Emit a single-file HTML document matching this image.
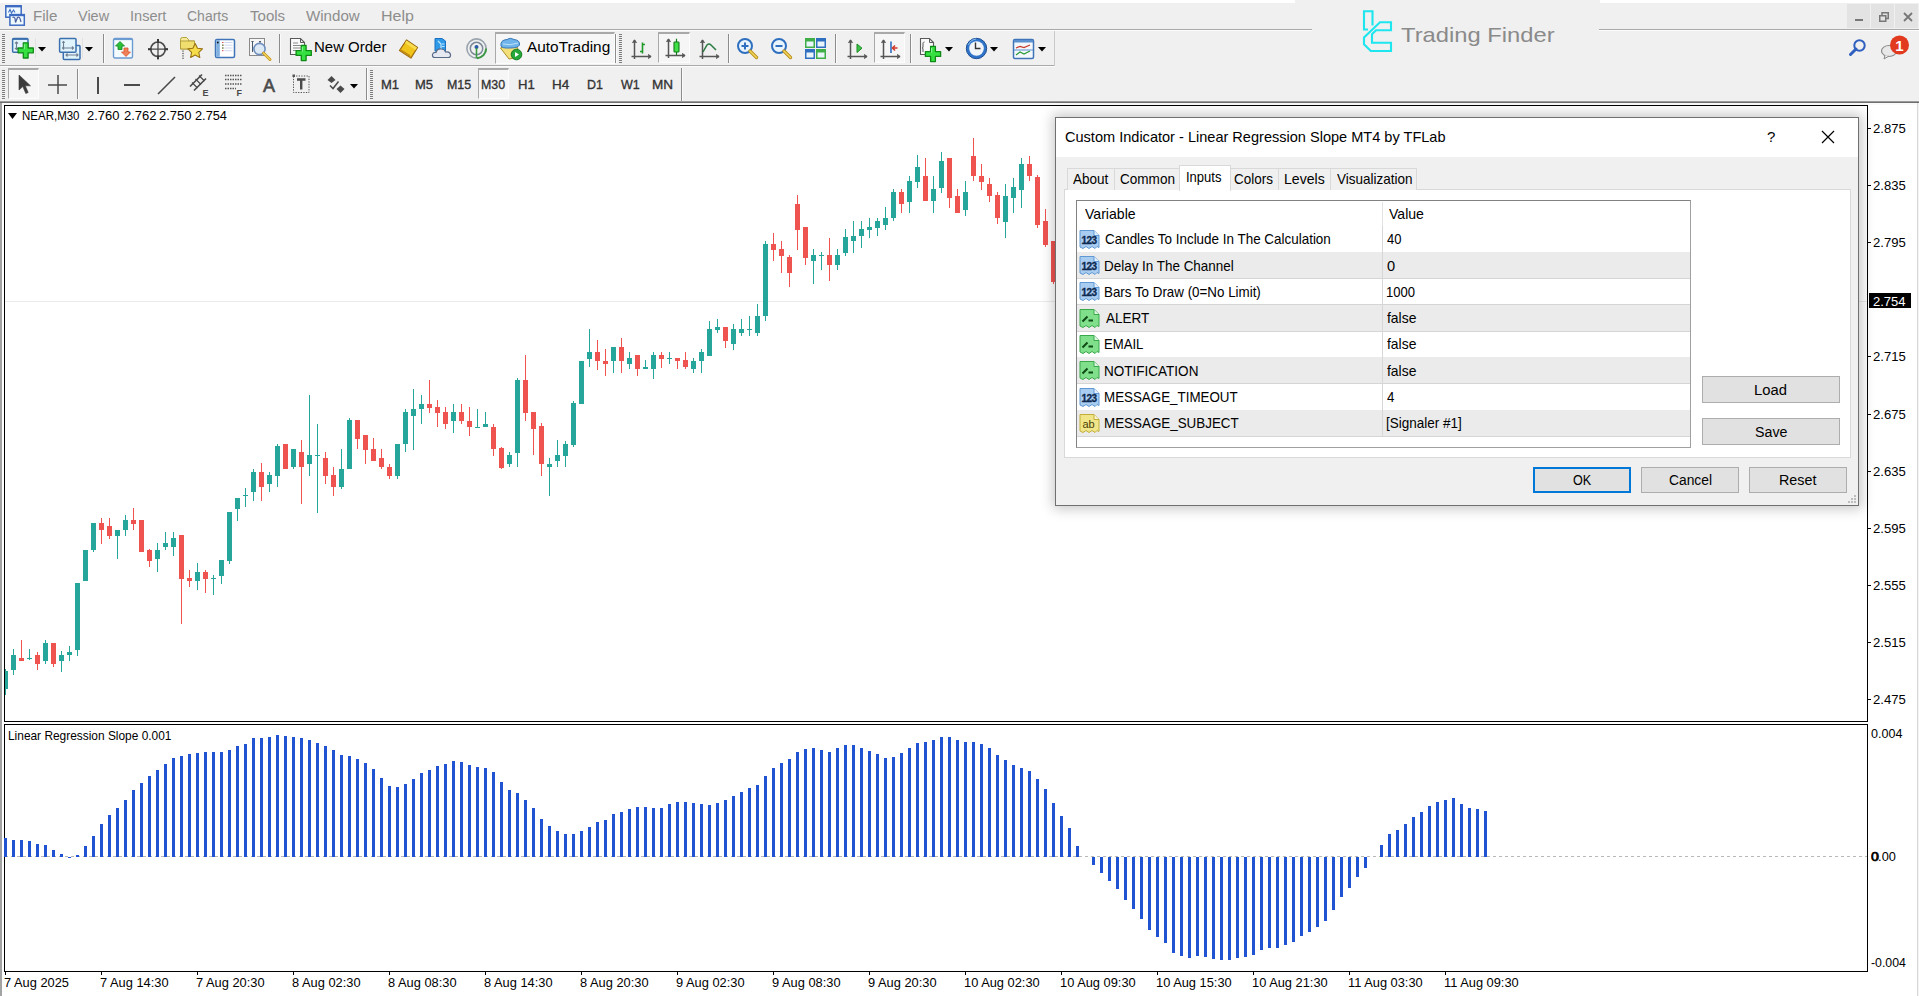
<!DOCTYPE html>
<html><head><meta charset="utf-8"><style>
*{margin:0;padding:0;box-sizing:border-box}
html,body{width:1919px;height:996px;overflow:hidden;background:#f0f0f0;font-family:"Liberation Sans",sans-serif;color:#000}
.a{position:absolute}
.t{position:absolute;white-space:nowrap;line-height:1}
svg{position:absolute;overflow:visible}
</style></head><body>

<div class="a" style="left:0;top:0;width:1919px;height:3px;background:#fff"></div>
<div class="a" style="left:1295px;top:0;width:305px;height:3px;background:#f0f0f0"></div>
<div class="a" style="left:0;top:29px;width:1312px;height:1px;background:#a9a9a9"></div>
<div class="a" style="left:1599px;top:29px;width:320px;height:1px;background:#a9a9a9"></div>
<div class="a" style="left:0;top:30px;width:1312px;height:1px;background:#fdfdfd"></div>
<div class="a" style="left:1599px;top:30px;width:320px;height:1px;background:#fdfdfd"></div>
<svg class="a" style="left:0px;top:0px" width="30" height="30" viewBox="0 0 30 30" >
<rect x="5.8" y="5.8" width="15.4" height="11.4" fill="#effaff" stroke="#3d6cc2" stroke-width="1.5"/>
<rect x="5.8" y="5.2" width="15.4" height="2.2" fill="#3d6cc2"/>
<path d="M8.5 12.5L10 9.5L11.5 13L13.5 10L15 12.5" stroke="#3d6cc2" stroke-width="1.1" fill="none"/>
<rect x="9.9" y="14.6" width="14.4" height="10.6" fill="#effaff" stroke="#3d6cc2" stroke-width="1.5"/>
<rect x="9.9" y="14" width="14.4" height="2.2" fill="#3d6cc2"/>
<path d="M12.5 17.5Q14 16.5 15 18.5L15.5 22.5L17.5 17.5Q19 16.5 20 18.5L21 22" stroke="#4a5fa0" stroke-width="1.2" fill="none"/>
</svg>
<div class="t" style="left:32.59px;top:8.48px;font-size:15.5px;color:#8d8d8d;transform:scaleX(0.9742);transform-origin:0 0;">File</div>
<div class="t" style="left:78.23px;top:8.48px;font-size:15.5px;color:#8d8d8d;transform:scaleX(0.9324);transform-origin:0 0;">View</div>
<div class="t" style="left:129.99px;top:8.48px;font-size:15.5px;color:#8d8d8d;transform:scaleX(0.9389);transform-origin:0 0;">Insert</div>
<div class="t" style="left:187.30px;top:8.48px;font-size:15.5px;color:#8d8d8d;transform:scaleX(0.9023);transform-origin:0 0;">Charts</div>
<div class="t" style="left:249.70px;top:8.48px;font-size:15.5px;color:#8d8d8d;transform:scaleX(0.9706);transform-origin:0 0;">Tools</div>
<div class="t" style="left:306.22px;top:8.48px;font-size:15.5px;color:#8d8d8d;transform:scaleX(0.9745);transform-origin:0 0;">Window</div>
<div class="t" style="left:380.72px;top:8.48px;font-size:15.5px;color:#8d8d8d;transform:scaleX(1.0336);transform-origin:0 0;">Help</div>
<div class="a" style="left:1847px;top:4px;width:23px;height:24px;background:#e3e3e3"></div>
<div class="a" style="left:1871px;top:4px;width:23px;height:24px;background:#e3e3e3"></div>
<div class="a" style="left:1895px;top:4px;width:23px;height:24px;background:#e3e3e3"></div>
<div class="a" style="left:1855px;top:19px;width:8px;height:2px;background:#777"></div><svg class="a" style="left:1879px;top:12px" width="10" height="10" viewBox="0 0 10 10" ><rect x="0.75" y="3.75" width="6" height="5.5" fill="none" stroke="#777" stroke-width="1.5"/><path d="M3 3.5V0.75H9.25V6.5H7" fill="none" stroke="#777" stroke-width="1.5"/></svg><svg class="a" style="left:1903px;top:12px" width="10" height="10" viewBox="0 0 10 10" ><path d="M1 1L9 9M9 1L1 9" stroke="#777" stroke-width="1.8"/></svg><svg class="a" style="left:1848px;top:38px" width="20" height="20" viewBox="0 0 20 20" ><circle cx="11.5" cy="7.5" r="5.2" fill="none" stroke="#2f5fbf" stroke-width="2"/><path d="M8 11L2.5 16.5" stroke="#2f5fbf" stroke-width="3" stroke-linecap="round"/></svg><svg class="a" style="left:1880px;top:34px" width="30" height="28" viewBox="0 0 30 28" ><ellipse cx="9" cy="17" rx="7.5" ry="5.5" fill="#e8e8e8" stroke="#8a8a8a" stroke-width="1.2"/><path d="M5 21L4 25L9 22" fill="#e8e8e8" stroke="#8a8a8a" stroke-width="1"/><circle cx="19.5" cy="11" r="9.5" fill="#e23a1e"/><text x="19.5" y="16.5" text-anchor="middle" font-family="Liberation Sans" font-weight="bold" font-size="15" fill="#fff">1</text></svg>
<svg class="a" style="left:1355px;top:5px" width="45" height="53" viewBox="0 0 45 53" ><g fill="none" stroke="#1de6ee" stroke-width="2.1" stroke-linejoin="miter">
      <path d="M13 24.5H9V6.3H17.5V20.5"/>
      <path d="M25 17.2H36V25.3H21L17 29.3V37.8H36V46H15.8L9 39.2V32.5Z"/>
      </g></svg><div class="t" style="left:1401.02px;top:25.31px;font-size:20.3px;color:#8a8a8a;transform:scaleX(1.1712);transform-origin:0 0;font-weight:300;">Trading Finder</div>
<div class="a" style="left:0;top:65px;width:1055px;height:1px;background:#a9a9a9"></div>
<div class="a" style="left:0;top:66px;width:1055px;height:1px;background:#fbfbfb"></div>
<div class="a" style="left:1054px;top:31px;width:1px;height:35px;background:#c9c9c9"></div>
<div class="a" style="left:0;top:101px;width:1919px;height:1px;background:#9c9c9c"></div>
<div class="a" style="left:0;top:102px;width:1919px;height:1px;background:#6e6e6e"></div>
<div class="a" style="left:0;top:103px;width:1919px;height:2px;background:#fafafa"></div>
<svg class="a" style="left:2px;top:34px" width="3" height="29" viewBox="0 0 3 29" shape-rendering="crispEdges"><rect x="0" y="0" width="3" height="1" fill="#7d7d7d"/><rect x="0" y="2" width="3" height="1" fill="#7d7d7d"/><rect x="0" y="4" width="3" height="1" fill="#7d7d7d"/><rect x="0" y="6" width="3" height="1" fill="#7d7d7d"/><rect x="0" y="8" width="3" height="1" fill="#7d7d7d"/><rect x="0" y="10" width="3" height="1" fill="#7d7d7d"/><rect x="0" y="12" width="3" height="1" fill="#7d7d7d"/><rect x="0" y="14" width="3" height="1" fill="#7d7d7d"/><rect x="0" y="16" width="3" height="1" fill="#7d7d7d"/><rect x="0" y="18" width="3" height="1" fill="#7d7d7d"/><rect x="0" y="20" width="3" height="1" fill="#7d7d7d"/><rect x="0" y="22" width="3" height="1" fill="#7d7d7d"/><rect x="0" y="24" width="3" height="1" fill="#7d7d7d"/><rect x="0" y="26" width="3" height="1" fill="#7d7d7d"/><rect x="0" y="28" width="3" height="1" fill="#7d7d7d"/></svg><svg class="a" style="left:11px;top:37px" width="24" height="22" viewBox="0 0 24 22" ><rect x="1.6" y="1.6" width="15.4" height="13.6" rx="1" fill="#e2f4fb" stroke="#3b6fae" stroke-width="1.5"/>
      <path d="M2 2.3H16.5" stroke="#3b6fae" stroke-width="1.2"/>
      <path d="M5.5 5V12.5M4 6.5L5.5 5L7 6.5M4 11L5.5 12.5L7 11" stroke="#6f7f90" stroke-width="1.1" fill="none"/>
      <path d="M12.299999999999999 5.800000000000001H17.099999999999998V11.0H22.299999999999997V15.8H17.099999999999998V21.0H12.299999999999999V15.8H7.1V11.0H12.299999999999999Z" fill="#35e040" stroke="#0f8a16" stroke-width="1.3" stroke-linejoin="round"/><path d="M13.299999999999999 7.300000000000001V12.0" stroke="#8ff59a" stroke-width="1"/></svg><svg class="a" style="left:38px;top:47px" width="9" height="5" viewBox="0 0 9 5" ><path d="M0 0H8L4 4.5Z" fill="#000"/></svg><div class="a" style="left:35px;top:38px;width:1px;height:20px;background:#e2e2e2"></div><svg class="a" style="left:58px;top:37px" width="24" height="24" viewBox="0 0 24 24" ><rect x="5.3" y="8.6" width="16.7" height="14" rx="1" fill="#e2f4fb" stroke="#3b6fae" stroke-width="1.5"/>
      <path d="M8 18H20M9.5 16.5L8 18L9.5 19.5M18.5 16.5L20 18L18.5 19.5" stroke="#6f7f90" stroke-width="1.1" fill="none"/>
      <rect x="1.6" y="1.6" width="16.4" height="13.6" rx="1" fill="#e2f4fb" stroke="#3b6fae" stroke-width="1.5"/>
      <path d="M4.5 11H15.5M6 9.5L4.5 11L6 12.5M14 9.5L15.5 11L14 12.5M5.5 4.5V9.5M4.3 5.7L5.5 4.5L6.7 5.7" stroke="#6f7f90" stroke-width="1.1" fill="none"/></svg><svg class="a" style="left:85px;top:47px" width="9" height="5" viewBox="0 0 9 5" ><path d="M0 0H8L4 4.5Z" fill="#000"/></svg><div class="a" style="left:82px;top:38px;width:1px;height:20px;background:#e2e2e2"></div><div class="a" style="left:103px;top:34px;width:1px;height:29px;background:#8c8c8c"></div><div class="a" style="left:104px;top:34px;width:1px;height:29px;background:#fbfbfb"></div><svg class="a" style="left:112px;top:37px" width="23" height="23" viewBox="0 0 23 23" ><rect x="1.5" y="1.5" width="19" height="19.5" rx="1.5" fill="#f4fbfe" stroke="#6c9bd2" stroke-width="1.4"/>
      <path d="M2 2.5H20" stroke="#6c9bd2" stroke-width="1.2"/>
      <path d="M8 4.5L12.5 9H10V12.5H6V9H3.5Z" fill="#2bc23a" stroke="#13801c" stroke-width="0.8"/>
      <path d="M14 19.5L18.5 15H16V11H12V15H9.5Z" fill="#f08058" stroke="#d9542c" stroke-width="0.8"/></svg><svg class="a" style="left:147px;top:38px" width="22" height="22" viewBox="0 0 22 22" ><circle cx="11" cy="11.2" r="7.2" fill="none" stroke="#4a4a4a" stroke-width="1.7"/>
      <path d="M11 1V21.2M1 11.2H21" stroke="#4a4a4a" stroke-width="1.3"/>
      <path d="M11 1V5M11 17.4V21.2M1 11.2H4.5M17.5 11.2H21" stroke="#3a3a3a" stroke-width="2"/></svg><svg class="a" style="left:179px;top:36px" width="25" height="26" viewBox="0 0 25 26" ><path d="M1.5 3.5Q1.5 1.5 3.5 1.5H7.5L9.5 3.5V5H15.5V13H1.5Z" fill="#f7ea9a" stroke="#b3a13c" stroke-width="1"/>
      <path d="M1.5 5H15.5V13H1.5Z" fill="#f0de6e" stroke="#b3a13c" stroke-width="1"/>
      <path d="M16.2 7.5L18.5 12.2L23.5 12.9L19.8 16.4L20.8 21.5L16.2 19L11.6 21.5L12.6 16.4L8.9 12.9L13.9 12.2Z" fill="#f5dc48" stroke="#9a7414" stroke-width="1.1" stroke-linejoin="round"/>
      <path d="M4 14.5V23.5" stroke="#222" stroke-width="1" stroke-dasharray="1.2,1.2"/></svg><svg class="a" style="left:214px;top:38px" width="22" height="21" viewBox="0 0 22 21" ><rect x="1.5" y="1.5" width="19" height="18" rx="1.5" fill="#fff" stroke="#3f75b8" stroke-width="1.5"/>
      <rect x="2.2" y="2.2" width="3.6" height="16.6" fill="#7fb0e0"/>
      <circle cx="3.8" cy="4.5" r="0.9" fill="#111"/>
      <path d="M8 4.5H9.5M8 7.2H9.5M8 10H9.5M8 12.7H9.5" stroke="#d05050" stroke-width="1"/>
      <path d="M8 7.2H9.5M8 10H9.5" stroke="#4a9a4a" stroke-width="1"/>
      <path d="M10.5 4.5H18.5M10.5 7.2H18.5M10.5 10H18.5M10.5 12.7H18.5" stroke="#c8d4ec" stroke-width="0.9"/></svg><svg class="a" style="left:248px;top:37px" width="25" height="26" viewBox="0 0 25 26" ><rect x="1.5" y="1.5" width="15" height="17" fill="#f6f6f6" stroke="#8a8a8a" stroke-width="1"/>
      <path d="M4.5 4V15M3.5 5L4.5 4L5.5 5M12 4V15M11 5L12 4L13 5" stroke="#4a5a6a" stroke-width="1"/>
      <circle cx="11.5" cy="12" r="5.6" fill="#dde9f5" stroke="#6e8fbf" stroke-width="1.6"/>
      <path d="M15.5 16L22 22.5" stroke="#c89a1c" stroke-width="3" stroke-linecap="round"/>
      <path d="M15.5 16L22 22.5" stroke="#f0d060" stroke-width="1.2" stroke-linecap="round"/></svg><div class="a" style="left:279px;top:34px;width:1px;height:29px;background:#8c8c8c"></div><div class="a" style="left:280px;top:34px;width:1px;height:29px;background:#fbfbfb"></div><svg class="a" style="left:289px;top:37px" width="24" height="25" viewBox="0 0 24 25" ><path d="M1.5 1.5H11.5L15.5 5.5V17.5H1.5Z" fill="#fafafa" stroke="#5a5a5a" stroke-width="1.1"/>
      <path d="M11.5 1.5V5.5H15.5" fill="none" stroke="#5a5a5a" stroke-width="1"/>
      <path d="M4 6H9M4 8.5H12M4 11H12M4 13.5H8" stroke="#8a8a8a" stroke-width="1"/>
      <path d="M12.299999999999999 8.4H17.099999999999998V13.6H22.299999999999997V18.4H17.099999999999998V23.6H12.299999999999999V18.4H7.1V13.6H12.299999999999999Z" fill="#35e040" stroke="#0f8a16" stroke-width="1.3" stroke-linejoin="round"/><path d="M13.299999999999999 9.9V14.6" stroke="#8ff59a" stroke-width="1"/></svg><div class="t" style="left:314.10px;top:40.47px;font-size:14.8px;color:#000;transform:scaleX(1.0121);transform-origin:0 0;">New Order</div><svg class="a" style="left:397px;top:38px" width="24" height="22" viewBox="0 0 24 22" ><path d="M2.5 12.5L9.5 2L20.5 9.5L14 20Z" fill="#f0c419" stroke="#9c6a10" stroke-width="1.3" stroke-linejoin="round"/>
      <path d="M9.5 2.5L20 9.5L18.5 12L8 5Z" fill="#f8dc50"/>
      <path d="M2.5 12.5L14 20L13 17L3.5 11Z" fill="#c08a18"/></svg><svg class="a" style="left:431px;top:37px" width="24" height="23" viewBox="0 0 24 23" ><path d="M4 1.5H11L14.5 4V14H4Z" fill="#2e9ae8" stroke="#1a6fc0" stroke-width="1"/>
      <path d="M7 4L10 7V13M11 7H13.5M11 9.5H13.5" stroke="#bfe6ff" stroke-width="1.2" fill="none"/>
      <path d="M4 20.5Q1 20.5 1.5 17.5Q2 15 5 15.5Q6 11.5 10.5 12Q14 12.5 14.5 15Q18.5 14 19.5 17.5Q20 20.5 17 20.5Z" fill="#e6e8f2" stroke="#5a6b88" stroke-width="1.2"/></svg><svg class="a" style="left:465px;top:37px" width="24" height="24" viewBox="0 0 24 24" ><circle cx="11.5" cy="11.5" r="9.6" fill="none" stroke="#9aa4ae" stroke-width="1.6"/>
      <circle cx="11.5" cy="11.5" r="6.2" fill="none" stroke="#7a8898" stroke-width="1.5"/>
      <circle cx="11.5" cy="10" r="2" fill="#2a5aa8"/>
      <path d="M12 21.2A9.6 9.6 0 0 0 21.1 11.5" fill="none" stroke="#3a9a42" stroke-width="2"/>
      <path d="M11.5 11V21" stroke="#3a9a42" stroke-width="1.6"/></svg><div class="a" style="left:495px;top:32px;width:120px;height:32px;background:#f6f6f6;border-top:2px solid #a9a9a9;border-left:1px solid #a9a9a9;border-right:1px solid #fdfdfd;border-bottom:1px solid #fdfdfd"></div><svg class="a" style="left:498px;top:36px" width="26" height="25" viewBox="0 0 26 25" ><path d="M2.5 12L13 8L20 12L16 22L11 23Z" fill="#f3e07a" stroke="#a89030" stroke-width="1"/>
      <path d="M3 10Q2 4 9 3.5Q12 1 16 3.5Q22 4 21.5 9Q20 12 12 12Q4 12.5 3 10Z" fill="#6fb4ea" stroke="#3a78b8" stroke-width="1"/>
      <path d="M5 8Q12 10 20 7" stroke="#bfe2fb" stroke-width="1" fill="none"/>
      <circle cx="18.5" cy="18.5" r="5.3" fill="#27a83a" stroke="#137a22" stroke-width="1"/>
      <path d="M17 16V21L21 18.5Z" fill="#fff"/></svg><div class="t" style="left:527.00px;top:40.47px;font-size:14.8px;color:#000;transform:scaleX(1.0394);transform-origin:0 0;">AutoTrading</div><div class="a" style="left:615px;top:34px;width:1px;height:29px;background:#8c8c8c"></div><div class="a" style="left:616px;top:34px;width:1px;height:29px;background:#fbfbfb"></div><svg class="a" style="left:619px;top:34px" width="3" height="29" viewBox="0 0 3 29" shape-rendering="crispEdges"><rect x="0" y="0" width="3" height="1" fill="#7d7d7d"/><rect x="0" y="2" width="3" height="1" fill="#7d7d7d"/><rect x="0" y="4" width="3" height="1" fill="#7d7d7d"/><rect x="0" y="6" width="3" height="1" fill="#7d7d7d"/><rect x="0" y="8" width="3" height="1" fill="#7d7d7d"/><rect x="0" y="10" width="3" height="1" fill="#7d7d7d"/><rect x="0" y="12" width="3" height="1" fill="#7d7d7d"/><rect x="0" y="14" width="3" height="1" fill="#7d7d7d"/><rect x="0" y="16" width="3" height="1" fill="#7d7d7d"/><rect x="0" y="18" width="3" height="1" fill="#7d7d7d"/><rect x="0" y="20" width="3" height="1" fill="#7d7d7d"/><rect x="0" y="22" width="3" height="1" fill="#7d7d7d"/><rect x="0" y="24" width="3" height="1" fill="#7d7d7d"/><rect x="0" y="26" width="3" height="1" fill="#7d7d7d"/><rect x="0" y="28" width="3" height="1" fill="#7d7d7d"/></svg><svg class="a" style="left:631px;top:39px" width="21" height="21" viewBox="0 0 21 21" ><path d="M3.5 1V20M0.5 17.5H20" stroke="#555" stroke-width="1.5" fill="none"/>
      <path d="M1.3 3.8L3.5 0.8L5.7 3.8M17.2 15.3L20.2 17.5L17.2 19.7" fill="#555" stroke="#555" stroke-width="0.8"/><path d="M11.5 3.5V14.5M9 12.5H11.5M11.5 5.5H14" stroke="#1f9a2a" stroke-width="1.6" fill="none"/></svg><div class="a" style="left:658px;top:32px;width:32px;height:31px;background:#f6f6f6;border-top:2px solid #a9a9a9;border-left:1px solid #a9a9a9;border-right:1px solid #fdfdfd;border-bottom:1px solid #fdfdfd"></div><svg class="a" style="left:665px;top:38px" width="21" height="22" viewBox="0 0 21 22" ><path d="M3.5 1V20M0.5 17.5H20" stroke="#555" stroke-width="1.5" fill="none"/>
      <path d="M1.3 3.8L3.5 0.8L5.7 3.8M17.2 15.3L20.2 17.5L17.2 19.7" fill="#555" stroke="#555" stroke-width="0.8"/><rect x="9" y="4" width="5" height="10" rx="0.8" fill="#3ee046" stroke="#127a1a" stroke-width="1.1"/>
      <path d="M11.5 0.8V4M11.5 14V17" stroke="#127a1a" stroke-width="1.2"/></svg><svg class="a" style="left:699px;top:39px" width="21" height="21" viewBox="0 0 21 21" ><path d="M3.5 1V20M0.5 17.5H20" stroke="#555" stroke-width="1.5" fill="none"/>
      <path d="M1.3 3.8L3.5 0.8L5.7 3.8M17.2 15.3L20.2 17.5L17.2 19.7" fill="#555" stroke="#555" stroke-width="0.8"/><path d="M4 13L8 6Q10 4 12 6L17 11" fill="none" stroke="#2a7a42" stroke-width="1.5"/></svg><div class="a" style="left:728px;top:34px;width:1px;height:29px;background:#8c8c8c"></div><div class="a" style="left:729px;top:34px;width:1px;height:29px;background:#fbfbfb"></div><svg class="a" style="left:736px;top:37px" width="24" height="24" viewBox="0 0 24 24" ><circle cx="9" cy="9" r="7" fill="#eaf4fc" stroke="#2e6fbf" stroke-width="2"/>
      <path d="M5.5 9H12.5M9 5.5V12.5" stroke="#2e6fbf" stroke-width="2"/>
      <path d="M14 14L20.5 20.5" stroke="#b8901c" stroke-width="3.4" stroke-linecap="round"/>
      <path d="M14 14L20.5 20.5" stroke="#f2d45a" stroke-width="1.6" stroke-linecap="round"/></svg><svg class="a" style="left:770px;top:37px" width="24" height="24" viewBox="0 0 24 24" ><circle cx="9" cy="9" r="7" fill="#eaf4fc" stroke="#2e6fbf" stroke-width="2"/>
      <path d="M5.5 9H12.5" stroke="#2e6fbf" stroke-width="2"/>
      <path d="M14 14L20.5 20.5" stroke="#b8901c" stroke-width="3.4" stroke-linecap="round"/>
      <path d="M14 14L20.5 20.5" stroke="#f2d45a" stroke-width="1.6" stroke-linecap="round"/></svg><svg class="a" style="left:804px;top:37px" width="23" height="23" viewBox="0 0 23 23" ><rect x="1" y="1" width="10" height="10" fill="#3fae47"/><rect x="12" y="1" width="10" height="10" fill="#2e6fbf"/>
      <rect x="1" y="12" width="10" height="10" fill="#2e6fbf"/><rect x="12" y="12" width="10" height="10" fill="#3fae47"/>
      <rect x="2.5" y="4.5" width="7" height="5" fill="#e9f5fb"/><rect x="13.5" y="4.5" width="7" height="5" fill="#e9f5fb"/>
      <rect x="2.5" y="15.5" width="7" height="5" fill="#e9f5fb"/><rect x="13.5" y="15.5" width="7" height="5" fill="#e9f5fb"/></svg><div class="a" style="left:835px;top:34px;width:1px;height:29px;background:#8c8c8c"></div><div class="a" style="left:836px;top:34px;width:1px;height:29px;background:#fbfbfb"></div><svg class="a" style="left:847px;top:39px" width="21" height="21" viewBox="0 0 21 21" ><path d="M3.5 1V20M0.5 17.5H20" stroke="#555" stroke-width="1.5" fill="none"/>
      <path d="M1.3 3.8L3.5 0.8L5.7 3.8M17.2 15.3L20.2 17.5L17.2 19.7" fill="#555" stroke="#555" stroke-width="0.8"/><path d="M10 5V13.5L15 9.2Z" fill="#3fc24a" stroke="#1a8a22" stroke-width="1"/></svg><div class="a" style="left:874px;top:32px;width:31px;height:31px;background:#f6f6f6;border-top:2px solid #a9a9a9;border-left:1px solid #a9a9a9;border-right:1px solid #fdfdfd;border-bottom:1px solid #fdfdfd"></div><svg class="a" style="left:880px;top:39px" width="21" height="21" viewBox="0 0 21 21" ><path d="M3.5 1V20M0.5 17.5H20" stroke="#555" stroke-width="1.5" fill="none"/>
      <path d="M1.3 3.8L3.5 0.8L5.7 3.8M17.2 15.3L20.2 17.5L17.2 19.7" fill="#555" stroke="#555" stroke-width="0.8"/><path d="M11 2.5V14" stroke="#2e6fbf" stroke-width="1.6"/><path d="M17.5 9H13M15 6.5L12.5 9L15 11.5" fill="none" stroke="#d23a2a" stroke-width="1.6"/></svg><div class="a" style="left:910px;top:34px;width:1px;height:29px;background:#8c8c8c"></div><div class="a" style="left:911px;top:34px;width:1px;height:29px;background:#fbfbfb"></div><svg class="a" style="left:919px;top:37px" width="24" height="26" viewBox="0 0 24 26" ><path d="M1.5 1.5H10.5L14.5 5.5V17.5H1.5Z" fill="#fafafa" stroke="#5a5a5a" stroke-width="1.1"/>
      <path d="M10.5 1.5V5.5H14.5" fill="none" stroke="#5a5a5a" stroke-width="1"/>
      <path d="M5.5 5C4 5 4 6 4 7V10Q4 11 3 11Q4 11 4 12V15" fill="none" stroke="#555" stroke-width="1"/>
      <path d="M11.6 9.4H16.4V14.6H21.6V19.4H16.4V24.6H11.6V19.4H6.4V14.6H11.6Z" fill="#35e040" stroke="#0f8a16" stroke-width="1.3" stroke-linejoin="round"/><path d="M12.6 10.9V15.6" stroke="#8ff59a" stroke-width="1"/></svg><svg class="a" style="left:945px;top:47px" width="9" height="5" viewBox="0 0 9 5" ><path d="M0 0H8L4 4.5Z" fill="#000"/></svg><svg class="a" style="left:965px;top:37px" width="23" height="23" viewBox="0 0 23 23" ><circle cx="11.5" cy="11.5" r="10.2" fill="#2f74c8" stroke="#1c4f96" stroke-width="1"/>
      <circle cx="11.5" cy="11.5" r="7.3" fill="#f2f6fb"/>
      <path d="M10.5 5.5V11.5H15.5" stroke="#333" stroke-width="1.4" fill="none"/>
      <path d="M3.5 8Q5 3 11 2" stroke="#8cc0f0" stroke-width="1" fill="none"/></svg><svg class="a" style="left:990px;top:47px" width="9" height="5" viewBox="0 0 9 5" ><path d="M0 0H8L4 4.5Z" fill="#000"/></svg><svg class="a" style="left:1012px;top:38px" width="23" height="22" viewBox="0 0 23 22" ><rect x="1.5" y="1.5" width="20" height="19" rx="1.5" fill="#f4f8fc" stroke="#3f75b8" stroke-width="1.5"/>
      <rect x="2" y="2" width="19" height="2.5" fill="#5a90d0"/>
      <path d="M4 10L8 8.5L12 9.5L18 7" fill="none" stroke="#c83a2a" stroke-width="1.2"/>
      <path d="M4 17L8 14L12 16L18 13" fill="none" stroke="#2a9a3a" stroke-width="1.2"/>
      <path d="M2 12H21" stroke="#5a90d0" stroke-width="1"/></svg><svg class="a" style="left:1038px;top:47px" width="9" height="5" viewBox="0 0 9 5" ><path d="M0 0H8L4 4.5Z" fill="#000"/></svg>
<svg class="a" style="left:2px;top:70px" width="3" height="29" viewBox="0 0 3 29" shape-rendering="crispEdges"><rect x="0" y="0" width="3" height="1" fill="#7d7d7d"/><rect x="0" y="2" width="3" height="1" fill="#7d7d7d"/><rect x="0" y="4" width="3" height="1" fill="#7d7d7d"/><rect x="0" y="6" width="3" height="1" fill="#7d7d7d"/><rect x="0" y="8" width="3" height="1" fill="#7d7d7d"/><rect x="0" y="10" width="3" height="1" fill="#7d7d7d"/><rect x="0" y="12" width="3" height="1" fill="#7d7d7d"/><rect x="0" y="14" width="3" height="1" fill="#7d7d7d"/><rect x="0" y="16" width="3" height="1" fill="#7d7d7d"/><rect x="0" y="18" width="3" height="1" fill="#7d7d7d"/><rect x="0" y="20" width="3" height="1" fill="#7d7d7d"/><rect x="0" y="22" width="3" height="1" fill="#7d7d7d"/><rect x="0" y="24" width="3" height="1" fill="#7d7d7d"/><rect x="0" y="26" width="3" height="1" fill="#7d7d7d"/><rect x="0" y="28" width="3" height="1" fill="#7d7d7d"/></svg><div class="a" style="left:8px;top:68px;width:31px;height:31px;background:#f6f6f6;border-top:2px solid #a9a9a9;border-left:1px solid #a9a9a9;border-right:1px solid #fdfdfd;border-bottom:1px solid #fdfdfd"></div><svg class="a" style="left:17px;top:74px" width="14" height="22" viewBox="0 0 14 22" ><path d="M2 1V16L5.8 12.6L8.8 19.5L11.2 18.5L8.3 11.8H13.5Z" fill="#3c3c3c" stroke="#3c3c3c" stroke-width="0.6" stroke-linejoin="round"/></svg><svg class="a" style="left:47px;top:74px" width="22" height="22" viewBox="0 0 22 22" ><path d="M11 1V20M1 11H20" stroke="#4a4a4a" stroke-width="1.5"/></svg><div class="a" style="left:77px;top:69px;width:1px;height:30px;background:#8c8c8c"></div><div class="a" style="left:78px;top:69px;width:1px;height:30px;background:#fbfbfb"></div><div class="a" style="left:97px;top:77px;width:2px;height:17px;background:#4a4a4a"></div><div class="a" style="left:124px;top:84px;width:16px;height:2px;background:#4a4a4a"></div><svg class="a" style="left:157px;top:76px" width="19" height="19" viewBox="0 0 19 19" ><path d="M1 18L18 1" stroke="#4a4a4a" stroke-width="1.6"/></svg><svg class="a" style="left:189px;top:73px" width="23" height="24" viewBox="0 0 23 24" ><path d="M1 13.5L13 1.5M5 17.5L17 5.5" stroke="#4a4a4a" stroke-width="1.6"/><path d="M3 9.5L8.5 15M6.5 6L12 11.5M10 2.5L15.5 8" stroke="#4a4a4a" stroke-width="1.2"/>
       <text x="13.5" y="23" font-family="Liberation Sans" font-weight="bold" font-size="9" fill="#4a4a4a">E</text></svg><svg class="a" style="left:224px;top:73px" width="22" height="24" viewBox="0 0 22 24" ><path d="M1 2.5H18M1 6.5H18M1 11H18M1 15.5H12" stroke="#555" stroke-width="1.3" stroke-dasharray="1.5,1"/>
       <text x="12.5" y="23" font-family="Liberation Sans" font-weight="bold" font-size="9" fill="#4a4a4a">F</text></svg><div class="t" style="left:263.00px;top:75.91px;font-size:19px;color:#4a4a4a;transform:scaleX(0.9497);transform-origin:0 0;-webkit-text-stroke:0.6px #4a4a4a;">A</div><svg class="a" style="left:292px;top:74px" width="19" height="20" viewBox="0 0 19 20" ><rect x="1.5" y="2" width="15.5" height="16.5" fill="none" stroke="#555" stroke-width="1" stroke-dasharray="1.3,1.3"/>
       <rect x="0.5" y="0.5" width="2.5" height="2.5" fill="#555"/>
       <path d="M5 5.5H13.5M9.2 5.5V15.5" stroke="#4a4a4a" stroke-width="2.4"/></svg><svg class="a" style="left:326px;top:75px" width="20" height="19" viewBox="0 0 20 19" ><path d="M5.5 1L9.5 5L5.5 8L1.5 5Z" fill="#4a4a4a"/><path d="M14.5 10.5L18.5 14L14.5 18L10.5 14Z" fill="#4a4a4a"/><path d="M4 10.5L7 13.5L12.5 6.5" fill="none" stroke="#4a4a4a" stroke-width="1.5"/></svg><svg class="a" style="left:350px;top:84px" width="9" height="5" viewBox="0 0 9 5" ><path d="M0 0H8L4 4.5Z" fill="#000"/></svg><div class="a" style="left:366px;top:68px;width:1px;height:32px;background:#8c8c8c"></div><div class="a" style="left:367px;top:68px;width:1px;height:32px;background:#fbfbfb"></div><svg class="a" style="left:370px;top:70px" width="3" height="29" viewBox="0 0 3 29" shape-rendering="crispEdges"><rect x="0" y="0" width="3" height="1" fill="#7d7d7d"/><rect x="0" y="2" width="3" height="1" fill="#7d7d7d"/><rect x="0" y="4" width="3" height="1" fill="#7d7d7d"/><rect x="0" y="6" width="3" height="1" fill="#7d7d7d"/><rect x="0" y="8" width="3" height="1" fill="#7d7d7d"/><rect x="0" y="10" width="3" height="1" fill="#7d7d7d"/><rect x="0" y="12" width="3" height="1" fill="#7d7d7d"/><rect x="0" y="14" width="3" height="1" fill="#7d7d7d"/><rect x="0" y="16" width="3" height="1" fill="#7d7d7d"/><rect x="0" y="18" width="3" height="1" fill="#7d7d7d"/><rect x="0" y="20" width="3" height="1" fill="#7d7d7d"/><rect x="0" y="22" width="3" height="1" fill="#7d7d7d"/><rect x="0" y="24" width="3" height="1" fill="#7d7d7d"/><rect x="0" y="26" width="3" height="1" fill="#7d7d7d"/><rect x="0" y="28" width="3" height="1" fill="#7d7d7d"/></svg><div class="t" style="left:381.46px;top:78.34px;font-size:13.3px;color:#333;transform:scaleX(0.9807);transform-origin:0 0;-webkit-text-stroke:0.35px #333;">M1</div><div class="t" style="left:415.46px;top:78.34px;font-size:13.3px;color:#333;transform:scaleX(0.9769);transform-origin:0 0;-webkit-text-stroke:0.35px #333;">M5</div><div class="t" style="left:447.20px;top:78.34px;font-size:13.3px;color:#333;transform:scaleX(0.9352);transform-origin:0 0;-webkit-text-stroke:0.35px #333;">M15</div><div class="a" style="left:478px;top:68px;width:31px;height:31px;background:#f6f6f6;border-top:2px solid #a9a9a9;border-left:1px solid #a9a9a9;border-right:1px solid #fdfdfd;border-bottom:1px solid #fdfdfd"></div><div class="t" style="left:481.21px;top:78.34px;font-size:13.3px;color:#333;transform:scaleX(0.9327);transform-origin:0 0;-webkit-text-stroke:0.35px #333;">M30</div><div class="t" style="left:518.45px;top:78.34px;font-size:13.3px;color:#333;transform:scaleX(0.9873);transform-origin:0 0;-webkit-text-stroke:0.35px #333;">H1</div><div class="t" style="left:551.62px;top:78.34px;font-size:13.3px;color:#333;transform:scaleX(1.0154);transform-origin:0 0;-webkit-text-stroke:0.35px #333;">H4</div><div class="t" style="left:587.21px;top:78.34px;font-size:13.3px;color:#333;transform:scaleX(0.9349);transform-origin:0 0;-webkit-text-stroke:0.35px #333;">D1</div><div class="t" style="left:621.34px;top:78.34px;font-size:13.3px;color:#333;transform:scaleX(0.9386);transform-origin:0 0;-webkit-text-stroke:0.35px #333;">W1</div><div class="t" style="left:652.02px;top:78.34px;font-size:13.3px;color:#333;transform:scaleX(1.0187);transform-origin:0 0;-webkit-text-stroke:0.35px #333;">MN</div><div class="a" style="left:681px;top:68px;width:1px;height:33px;background:#8c8c8c"></div><div class="a" style="left:682px;top:68px;width:1px;height:33px;background:#fbfbfb"></div>
<div class="a" style="left:0;top:103px;width:2px;height:893px;background:#a3a3a3"></div>
<div class="a" style="left:2px;top:105px;width:2px;height:891px;background:#fff"></div>
<div class="a" style="left:1868px;top:105px;width:49px;height:891px;background:#fff"></div>
<div class="a" style="left:1917px;top:103px;width:1px;height:893px;background:#d9d9d9"></div>
<div class="a" style="left:1918px;top:103px;width:1px;height:893px;background:#f3f3f3"></div>
<div class="a" style="left:4px;top:971px;width:1864px;height:25px;background:#fff"></div>
<svg class="a" style="left:0;top:0" width="1919" height="996" viewBox="0 0 1919 996" shape-rendering="crispEdges"><rect x="5" y="106" width="1862" height="615" fill="#fff"/><rect x="4" y="722" width="1864" height="2" fill="#fff"/><rect x="5" y="725" width="1862" height="246" fill="#fff"/><rect x="4" y="105" width="1864" height="1" fill="#000"/><rect x="4" y="721" width="1864" height="1" fill="#000"/><rect x="4" y="105" width="1" height="617" fill="#000"/><rect x="1867" y="105" width="1" height="617" fill="#000"/><rect x="4" y="724" width="1864" height="1" fill="#000"/><rect x="4" y="971" width="1864" height="1" fill="#000"/><rect x="4" y="724" width="1" height="248" fill="#000"/><rect x="1867" y="724" width="1" height="248" fill="#000"/><rect x="5" y="301" width="1862" height="1" fill="#ebebeb"/><g><rect x="5" y="669" width="1" height="26" fill="#26a69a"/><rect x="5" y="671" width="3" height="18" fill="#26a69a"/><rect x="13" y="649" width="1" height="26" fill="#26a69a"/><rect x="11" y="655" width="5" height="15" fill="#26a69a"/><rect x="21" y="640" width="1" height="21" fill="#ef5350"/><rect x="19" y="658" width="5" height="3" fill="#ef5350"/><rect x="29" y="649" width="1" height="11" fill="#26a69a"/><rect x="27" y="658" width="5" height="1" fill="#26a69a"/><rect x="37" y="652" width="1" height="18" fill="#ef5350"/><rect x="35" y="655" width="5" height="9" fill="#ef5350"/><rect x="45" y="640" width="1" height="24" fill="#26a69a"/><rect x="43" y="643" width="5" height="18" fill="#26a69a"/><rect x="53" y="643" width="1" height="24" fill="#ef5350"/><rect x="51" y="643" width="5" height="21" fill="#ef5350"/><rect x="61" y="651" width="1" height="21" fill="#26a69a"/><rect x="59" y="655" width="5" height="6" fill="#26a69a"/><rect x="69" y="646" width="1" height="15" fill="#26a69a"/><rect x="67" y="652" width="5" height="3" fill="#26a69a"/><rect x="77" y="583" width="1" height="73" fill="#26a69a"/><rect x="75" y="583" width="5" height="67" fill="#26a69a"/><rect x="85" y="550" width="1" height="31" fill="#26a69a"/><rect x="83" y="550" width="5" height="31" fill="#26a69a"/><rect x="93" y="523" width="1" height="29" fill="#26a69a"/><rect x="91" y="523" width="5" height="27" fill="#26a69a"/><rect x="101" y="518" width="1" height="26" fill="#ef5350"/><rect x="99" y="523" width="5" height="7" fill="#ef5350"/><rect x="109" y="518" width="1" height="21" fill="#ef5350"/><rect x="107" y="526" width="5" height="10" fill="#ef5350"/><rect x="117" y="530" width="1" height="29" fill="#26a69a"/><rect x="115" y="530" width="5" height="6" fill="#26a69a"/><rect x="125" y="515" width="1" height="21" fill="#26a69a"/><rect x="123" y="520" width="5" height="10" fill="#26a69a"/><rect x="133" y="508" width="1" height="22" fill="#ef5350"/><rect x="131" y="520" width="5" height="4" fill="#ef5350"/><rect x="141" y="520" width="1" height="32" fill="#ef5350"/><rect x="139" y="520" width="5" height="32" fill="#ef5350"/><rect x="149" y="549" width="1" height="18" fill="#ef5350"/><rect x="147" y="550" width="5" height="11" fill="#ef5350"/><rect x="157" y="543" width="1" height="29" fill="#26a69a"/><rect x="155" y="550" width="5" height="9" fill="#26a69a"/><rect x="165" y="532" width="1" height="18" fill="#26a69a"/><rect x="163" y="543" width="5" height="4" fill="#26a69a"/><rect x="173" y="532" width="1" height="24" fill="#26a69a"/><rect x="171" y="538" width="5" height="9" fill="#26a69a"/><rect x="181" y="535" width="1" height="89" fill="#ef5350"/><rect x="179" y="535" width="5" height="44" fill="#ef5350"/><rect x="189" y="570" width="1" height="17" fill="#ef5350"/><rect x="187" y="578" width="5" height="3" fill="#ef5350"/><rect x="197" y="563" width="1" height="27" fill="#26a69a"/><rect x="195" y="572" width="5" height="9" fill="#26a69a"/><rect x="205" y="570" width="1" height="23" fill="#ef5350"/><rect x="203" y="572" width="5" height="7" fill="#ef5350"/><rect x="213" y="575" width="1" height="20" fill="#26a69a"/><rect x="211" y="578" width="5" height="1" fill="#26a69a"/><rect x="221" y="560" width="1" height="24" fill="#26a69a"/><rect x="219" y="560" width="5" height="16" fill="#26a69a"/><rect x="229" y="512" width="1" height="52" fill="#26a69a"/><rect x="227" y="512" width="5" height="49" fill="#26a69a"/><rect x="237" y="498" width="1" height="23" fill="#26a69a"/><rect x="235" y="498" width="5" height="11" fill="#26a69a"/><rect x="245" y="488" width="1" height="19" fill="#26a69a"/><rect x="243" y="495" width="5" height="1" fill="#26a69a"/><rect x="253" y="469" width="1" height="32" fill="#26a69a"/><rect x="251" y="472" width="5" height="20" fill="#26a69a"/><rect x="261" y="463" width="1" height="38" fill="#ef5350"/><rect x="259" y="472" width="5" height="15" fill="#ef5350"/><rect x="269" y="472" width="1" height="20" fill="#26a69a"/><rect x="267" y="475" width="5" height="9" fill="#26a69a"/><rect x="277" y="444" width="1" height="43" fill="#26a69a"/><rect x="275" y="446" width="5" height="30" fill="#26a69a"/><rect x="285" y="444" width="1" height="25" fill="#ef5350"/><rect x="283" y="444" width="5" height="25" fill="#ef5350"/><rect x="293" y="449" width="1" height="20" fill="#26a69a"/><rect x="291" y="449" width="5" height="18" fill="#26a69a"/><rect x="301" y="440" width="1" height="64" fill="#ef5350"/><rect x="299" y="452" width="5" height="15" fill="#ef5350"/><rect x="309" y="395" width="1" height="81" fill="#26a69a"/><rect x="307" y="455" width="5" height="9" fill="#26a69a"/><rect x="317" y="424" width="1" height="89" fill="#26a69a"/><rect x="315" y="455" width="5" height="1" fill="#26a69a"/><rect x="325" y="452" width="1" height="32" fill="#ef5350"/><rect x="323" y="458" width="5" height="18" fill="#ef5350"/><rect x="333" y="467" width="1" height="29" fill="#ef5350"/><rect x="331" y="475" width="5" height="12" fill="#ef5350"/><rect x="341" y="449" width="1" height="40" fill="#26a69a"/><rect x="339" y="469" width="5" height="18" fill="#26a69a"/><rect x="349" y="418" width="1" height="51" fill="#26a69a"/><rect x="347" y="420" width="5" height="49" fill="#26a69a"/><rect x="357" y="420" width="1" height="29" fill="#ef5350"/><rect x="355" y="420" width="5" height="19" fill="#ef5350"/><rect x="365" y="435" width="1" height="29" fill="#ef5350"/><rect x="363" y="435" width="5" height="15" fill="#ef5350"/><rect x="373" y="438" width="1" height="23" fill="#ef5350"/><rect x="371" y="449" width="5" height="12" fill="#ef5350"/><rect x="381" y="449" width="1" height="20" fill="#ef5350"/><rect x="379" y="458" width="5" height="9" fill="#ef5350"/><rect x="389" y="464" width="1" height="15" fill="#ef5350"/><rect x="387" y="467" width="5" height="9" fill="#ef5350"/><rect x="397" y="444" width="1" height="35" fill="#26a69a"/><rect x="395" y="444" width="5" height="32" fill="#26a69a"/><rect x="405" y="409" width="1" height="43" fill="#26a69a"/><rect x="403" y="412" width="5" height="32" fill="#26a69a"/><rect x="413" y="389" width="1" height="61" fill="#26a69a"/><rect x="411" y="409" width="5" height="7" fill="#26a69a"/><rect x="421" y="395" width="1" height="29" fill="#26a69a"/><rect x="419" y="404" width="5" height="5" fill="#26a69a"/><rect x="429" y="380" width="1" height="33" fill="#ef5350"/><rect x="427" y="404" width="5" height="4" fill="#ef5350"/><rect x="437" y="400" width="1" height="27" fill="#ef5350"/><rect x="435" y="407" width="5" height="6" fill="#ef5350"/><rect x="445" y="407" width="1" height="22" fill="#ef5350"/><rect x="443" y="412" width="5" height="12" fill="#ef5350"/><rect x="453" y="404" width="1" height="29" fill="#26a69a"/><rect x="451" y="412" width="5" height="9" fill="#26a69a"/><rect x="461" y="404" width="1" height="20" fill="#ef5350"/><rect x="459" y="412" width="5" height="9" fill="#ef5350"/><rect x="469" y="407" width="1" height="29" fill="#ef5350"/><rect x="467" y="421" width="5" height="6" fill="#ef5350"/><rect x="477" y="409" width="1" height="19" fill="#26a69a"/><rect x="475" y="427" width="5" height="1" fill="#26a69a"/><rect x="485" y="412" width="1" height="15" fill="#26a69a"/><rect x="483" y="424" width="5" height="3" fill="#26a69a"/><rect x="493" y="424" width="1" height="32" fill="#ef5350"/><rect x="491" y="427" width="5" height="22" fill="#ef5350"/><rect x="501" y="447" width="1" height="22" fill="#ef5350"/><rect x="499" y="448" width="5" height="20" fill="#ef5350"/><rect x="509" y="452" width="1" height="15" fill="#26a69a"/><rect x="507" y="455" width="5" height="9" fill="#26a69a"/><rect x="517" y="378" width="1" height="89" fill="#26a69a"/><rect x="515" y="380" width="5" height="73" fill="#26a69a"/><rect x="525" y="355" width="1" height="66" fill="#ef5350"/><rect x="523" y="380" width="5" height="33" fill="#ef5350"/><rect x="533" y="412" width="1" height="43" fill="#ef5350"/><rect x="531" y="412" width="5" height="17" fill="#ef5350"/><rect x="541" y="423" width="1" height="53" fill="#ef5350"/><rect x="539" y="426" width="5" height="38" fill="#ef5350"/><rect x="549" y="458" width="1" height="38" fill="#26a69a"/><rect x="547" y="464" width="5" height="3" fill="#26a69a"/><rect x="557" y="440" width="1" height="27" fill="#26a69a"/><rect x="555" y="455" width="5" height="6" fill="#26a69a"/><rect x="565" y="441" width="1" height="26" fill="#26a69a"/><rect x="563" y="444" width="5" height="12" fill="#26a69a"/><rect x="573" y="401" width="1" height="46" fill="#26a69a"/><rect x="571" y="403" width="5" height="42" fill="#26a69a"/><rect x="581" y="361" width="1" height="43" fill="#26a69a"/><rect x="579" y="361" width="5" height="43" fill="#26a69a"/><rect x="589" y="329" width="1" height="38" fill="#26a69a"/><rect x="587" y="352" width="5" height="7" fill="#26a69a"/><rect x="597" y="340" width="1" height="30" fill="#ef5350"/><rect x="595" y="352" width="5" height="9" fill="#ef5350"/><rect x="605" y="349" width="1" height="27" fill="#ef5350"/><rect x="603" y="361" width="5" height="3" fill="#ef5350"/><rect x="613" y="347" width="1" height="26" fill="#26a69a"/><rect x="611" y="347" width="5" height="14" fill="#26a69a"/><rect x="621" y="338" width="1" height="35" fill="#ef5350"/><rect x="619" y="347" width="5" height="14" fill="#ef5350"/><rect x="629" y="352" width="1" height="17" fill="#26a69a"/><rect x="627" y="358" width="5" height="6" fill="#26a69a"/><rect x="637" y="355" width="1" height="21" fill="#ef5350"/><rect x="635" y="355" width="5" height="14" fill="#ef5350"/><rect x="645" y="360" width="1" height="9" fill="#26a69a"/><rect x="643" y="367" width="5" height="2" fill="#26a69a"/><rect x="653" y="352" width="1" height="27" fill="#26a69a"/><rect x="651" y="355" width="5" height="14" fill="#26a69a"/><rect x="661" y="352" width="1" height="16" fill="#ef5350"/><rect x="659" y="355" width="5" height="4" fill="#ef5350"/><rect x="669" y="352" width="1" height="12" fill="#26a69a"/><rect x="667" y="358" width="5" height="1" fill="#26a69a"/><rect x="677" y="358" width="1" height="11" fill="#ef5350"/><rect x="675" y="358" width="5" height="3" fill="#ef5350"/><rect x="685" y="352" width="1" height="17" fill="#ef5350"/><rect x="683" y="360" width="5" height="7" fill="#ef5350"/><rect x="693" y="358" width="1" height="15" fill="#26a69a"/><rect x="691" y="361" width="5" height="8" fill="#26a69a"/><rect x="701" y="349" width="1" height="24" fill="#26a69a"/><rect x="699" y="352" width="5" height="9" fill="#26a69a"/><rect x="709" y="321" width="1" height="35" fill="#26a69a"/><rect x="707" y="329" width="5" height="27" fill="#26a69a"/><rect x="717" y="319" width="1" height="14" fill="#26a69a"/><rect x="715" y="327" width="5" height="3" fill="#26a69a"/><rect x="725" y="327" width="1" height="21" fill="#ef5350"/><rect x="723" y="327" width="5" height="14" fill="#ef5350"/><rect x="733" y="324" width="1" height="26" fill="#26a69a"/><rect x="731" y="329" width="5" height="15" fill="#26a69a"/><rect x="741" y="319" width="1" height="17" fill="#26a69a"/><rect x="739" y="329" width="5" height="4" fill="#26a69a"/><rect x="749" y="316" width="1" height="20" fill="#26a69a"/><rect x="747" y="329" width="5" height="1" fill="#26a69a"/><rect x="757" y="304" width="1" height="32" fill="#26a69a"/><rect x="755" y="316" width="5" height="17" fill="#26a69a"/><rect x="765" y="241" width="1" height="80" fill="#26a69a"/><rect x="763" y="244" width="5" height="72" fill="#26a69a"/><rect x="773" y="233" width="1" height="28" fill="#ef5350"/><rect x="771" y="244" width="5" height="6" fill="#ef5350"/><rect x="781" y="241" width="1" height="32" fill="#ef5350"/><rect x="779" y="249" width="5" height="7" fill="#ef5350"/><rect x="789" y="255" width="1" height="32" fill="#ef5350"/><rect x="787" y="257" width="5" height="16" fill="#ef5350"/><rect x="797" y="195" width="1" height="55" fill="#ef5350"/><rect x="795" y="204" width="5" height="26" fill="#ef5350"/><rect x="805" y="227" width="1" height="38" fill="#ef5350"/><rect x="803" y="227" width="5" height="31" fill="#ef5350"/><rect x="813" y="249" width="1" height="35" fill="#26a69a"/><rect x="811" y="255" width="5" height="6" fill="#26a69a"/><rect x="821" y="252" width="1" height="18" fill="#26a69a"/><rect x="819" y="255" width="5" height="1" fill="#26a69a"/><rect x="829" y="238" width="1" height="43" fill="#ef5350"/><rect x="827" y="255" width="5" height="10" fill="#ef5350"/><rect x="837" y="249" width="1" height="21" fill="#26a69a"/><rect x="835" y="255" width="5" height="10" fill="#26a69a"/><rect x="845" y="229" width="1" height="27" fill="#26a69a"/><rect x="843" y="237" width="5" height="16" fill="#26a69a"/><rect x="853" y="221" width="1" height="32" fill="#26a69a"/><rect x="851" y="236" width="5" height="5" fill="#26a69a"/><rect x="861" y="221" width="1" height="27" fill="#26a69a"/><rect x="859" y="229" width="5" height="7" fill="#26a69a"/><rect x="869" y="218" width="1" height="20" fill="#26a69a"/><rect x="867" y="227" width="5" height="3" fill="#26a69a"/><rect x="877" y="218" width="1" height="18" fill="#26a69a"/><rect x="875" y="221" width="5" height="7" fill="#26a69a"/><rect x="885" y="207" width="1" height="23" fill="#26a69a"/><rect x="883" y="218" width="5" height="7" fill="#26a69a"/><rect x="893" y="189" width="1" height="32" fill="#26a69a"/><rect x="891" y="192" width="5" height="26" fill="#26a69a"/><rect x="901" y="189" width="1" height="24" fill="#ef5350"/><rect x="899" y="192" width="5" height="12" fill="#ef5350"/><rect x="909" y="176" width="1" height="37" fill="#26a69a"/><rect x="907" y="181" width="5" height="21" fill="#26a69a"/><rect x="917" y="155" width="1" height="33" fill="#26a69a"/><rect x="915" y="167" width="5" height="15" fill="#26a69a"/><rect x="925" y="158" width="1" height="43" fill="#ef5350"/><rect x="923" y="176" width="5" height="25" fill="#ef5350"/><rect x="933" y="176" width="1" height="37" fill="#26a69a"/><rect x="931" y="189" width="5" height="12" fill="#26a69a"/><rect x="941" y="152" width="1" height="41" fill="#26a69a"/><rect x="939" y="161" width="5" height="27" fill="#26a69a"/><rect x="949" y="158" width="1" height="50" fill="#ef5350"/><rect x="947" y="158" width="5" height="40" fill="#ef5350"/><rect x="957" y="189" width="1" height="24" fill="#ef5350"/><rect x="955" y="196" width="5" height="17" fill="#ef5350"/><rect x="965" y="181" width="1" height="35" fill="#26a69a"/><rect x="963" y="192" width="5" height="18" fill="#26a69a"/><rect x="973" y="138" width="1" height="43" fill="#ef5350"/><rect x="971" y="156" width="5" height="20" fill="#ef5350"/><rect x="981" y="164" width="1" height="26" fill="#ef5350"/><rect x="979" y="176" width="5" height="6" fill="#ef5350"/><rect x="989" y="178" width="1" height="24" fill="#ef5350"/><rect x="987" y="184" width="5" height="12" fill="#ef5350"/><rect x="997" y="192" width="1" height="32" fill="#ef5350"/><rect x="995" y="195" width="5" height="23" fill="#ef5350"/><rect x="1005" y="184" width="1" height="54" fill="#26a69a"/><rect x="1003" y="196" width="5" height="26" fill="#26a69a"/><rect x="1013" y="178" width="1" height="35" fill="#26a69a"/><rect x="1011" y="187" width="5" height="11" fill="#26a69a"/><rect x="1021" y="158" width="1" height="50" fill="#26a69a"/><rect x="1019" y="164" width="5" height="26" fill="#26a69a"/><rect x="1029" y="156" width="1" height="25" fill="#ef5350"/><rect x="1027" y="164" width="5" height="12" fill="#ef5350"/><rect x="1037" y="175" width="1" height="53" fill="#ef5350"/><rect x="1035" y="177" width="5" height="48" fill="#ef5350"/><rect x="1045" y="209" width="1" height="38" fill="#ef5350"/><rect x="1043" y="221" width="5" height="24" fill="#ef5350"/><rect x="1053" y="241" width="1" height="43" fill="#ef5350"/><rect x="1051" y="241" width="5" height="41" fill="#ef5350"/></g><line x1="5" y1="856.5" x2="1867" y2="856.5" stroke="#b8b8b8" stroke-width="1" stroke-dasharray="3,3"/><g fill="#1f53d2"><rect x="4" y="838" width="3" height="19"/><rect x="12" y="840" width="3" height="17"/><rect x="20" y="840" width="3" height="17"/><rect x="28" y="841" width="3" height="16"/><rect x="36" y="844" width="3" height="13"/><rect x="44" y="845" width="3" height="12"/><rect x="52" y="850" width="3" height="7"/><rect x="60" y="854" width="3" height="3"/><rect x="76" y="855" width="3" height="2"/><rect x="84" y="846" width="3" height="11"/><rect x="92" y="836" width="3" height="21"/><rect x="100" y="824" width="3" height="33"/><rect x="108" y="815" width="3" height="42"/><rect x="116" y="808" width="3" height="49"/><rect x="124" y="800" width="3" height="57"/><rect x="132" y="790" width="3" height="67"/><rect x="140" y="783" width="3" height="74"/><rect x="148" y="776" width="3" height="81"/><rect x="156" y="770" width="3" height="87"/><rect x="164" y="764" width="3" height="93"/><rect x="172" y="758" width="3" height="99"/><rect x="180" y="756" width="3" height="101"/><rect x="188" y="754" width="3" height="103"/><rect x="196" y="753" width="3" height="104"/><rect x="204" y="752" width="3" height="105"/><rect x="212" y="752" width="3" height="105"/><rect x="220" y="752" width="3" height="105"/><rect x="228" y="750" width="3" height="107"/><rect x="236" y="746" width="3" height="111"/><rect x="244" y="744" width="3" height="113"/><rect x="252" y="738" width="3" height="119"/><rect x="260" y="738" width="3" height="119"/><rect x="268" y="737" width="3" height="120"/><rect x="276" y="735" width="3" height="122"/><rect x="284" y="736" width="3" height="121"/><rect x="292" y="737" width="3" height="120"/><rect x="300" y="738" width="3" height="119"/><rect x="308" y="740" width="3" height="117"/><rect x="316" y="743" width="3" height="114"/><rect x="324" y="746" width="3" height="111"/><rect x="332" y="750" width="3" height="107"/><rect x="340" y="755" width="3" height="102"/><rect x="348" y="756" width="3" height="101"/><rect x="356" y="759" width="3" height="98"/><rect x="364" y="763" width="3" height="94"/><rect x="372" y="769" width="3" height="88"/><rect x="380" y="778" width="3" height="79"/><rect x="388" y="786" width="3" height="71"/><rect x="396" y="787" width="3" height="70"/><rect x="404" y="784" width="3" height="73"/><rect x="412" y="779" width="3" height="78"/><rect x="420" y="773" width="3" height="84"/><rect x="428" y="770" width="3" height="87"/><rect x="436" y="766" width="3" height="91"/><rect x="444" y="764" width="3" height="93"/><rect x="452" y="761" width="3" height="96"/><rect x="460" y="762" width="3" height="95"/><rect x="468" y="765" width="3" height="92"/><rect x="476" y="767" width="3" height="90"/><rect x="484" y="768" width="3" height="89"/><rect x="492" y="772" width="3" height="85"/><rect x="500" y="782" width="3" height="75"/><rect x="508" y="790" width="3" height="67"/><rect x="516" y="793" width="3" height="64"/><rect x="524" y="800" width="3" height="57"/><rect x="532" y="808" width="3" height="49"/><rect x="540" y="819" width="3" height="38"/><rect x="548" y="826" width="3" height="31"/><rect x="556" y="831" width="3" height="26"/><rect x="564" y="834" width="3" height="23"/><rect x="572" y="834" width="3" height="23"/><rect x="580" y="831" width="3" height="26"/><rect x="588" y="827" width="3" height="30"/><rect x="596" y="822" width="3" height="35"/><rect x="604" y="820" width="3" height="37"/><rect x="612" y="814" width="3" height="43"/><rect x="620" y="812" width="3" height="45"/><rect x="628" y="809" width="3" height="48"/><rect x="636" y="807" width="3" height="50"/><rect x="644" y="807" width="3" height="50"/><rect x="652" y="808" width="3" height="49"/><rect x="660" y="808" width="3" height="49"/><rect x="668" y="804" width="3" height="53"/><rect x="676" y="802" width="3" height="55"/><rect x="684" y="802" width="3" height="55"/><rect x="692" y="803" width="3" height="54"/><rect x="700" y="804" width="3" height="53"/><rect x="708" y="805" width="3" height="52"/><rect x="716" y="803" width="3" height="54"/><rect x="724" y="800" width="3" height="57"/><rect x="732" y="796" width="3" height="61"/><rect x="740" y="792" width="3" height="65"/><rect x="748" y="788" width="3" height="69"/><rect x="756" y="785" width="3" height="72"/><rect x="764" y="776" width="3" height="81"/><rect x="772" y="768" width="3" height="89"/><rect x="780" y="763" width="3" height="94"/><rect x="788" y="759" width="3" height="98"/><rect x="796" y="752" width="3" height="105"/><rect x="804" y="749" width="3" height="108"/><rect x="812" y="748" width="3" height="109"/><rect x="820" y="750" width="3" height="107"/><rect x="828" y="752" width="3" height="105"/><rect x="836" y="748" width="3" height="109"/><rect x="844" y="745" width="3" height="112"/><rect x="852" y="745" width="3" height="112"/><rect x="860" y="748" width="3" height="109"/><rect x="868" y="751" width="3" height="106"/><rect x="876" y="754" width="3" height="103"/><rect x="884" y="758" width="3" height="99"/><rect x="892" y="757" width="3" height="100"/><rect x="900" y="753" width="3" height="104"/><rect x="908" y="748" width="3" height="109"/><rect x="916" y="743" width="3" height="114"/><rect x="924" y="742" width="3" height="115"/><rect x="932" y="740" width="3" height="117"/><rect x="940" y="737" width="3" height="120"/><rect x="948" y="737" width="3" height="120"/><rect x="956" y="740" width="3" height="117"/><rect x="964" y="742" width="3" height="115"/><rect x="972" y="742" width="3" height="115"/><rect x="980" y="744" width="3" height="113"/><rect x="988" y="748" width="3" height="109"/><rect x="996" y="755" width="3" height="102"/><rect x="1004" y="760" width="3" height="97"/><rect x="1012" y="765" width="3" height="92"/><rect x="1020" y="768" width="3" height="89"/><rect x="1028" y="771" width="3" height="86"/><rect x="1036" y="779" width="3" height="78"/><rect x="1044" y="789" width="3" height="68"/><rect x="1052" y="803" width="3" height="54"/><rect x="1060" y="816" width="3" height="41"/><rect x="1068" y="828" width="3" height="29"/><rect x="1076" y="846" width="3" height="11"/><rect x="1380" y="845" width="3" height="12"/><rect x="1388" y="834" width="3" height="23"/><rect x="1396" y="830" width="3" height="27"/><rect x="1404" y="824" width="3" height="33"/><rect x="1412" y="817" width="3" height="40"/><rect x="1420" y="812" width="3" height="45"/><rect x="1428" y="806" width="3" height="51"/><rect x="1436" y="802" width="3" height="55"/><rect x="1444" y="800" width="3" height="57"/><rect x="1452" y="798" width="3" height="59"/><rect x="1460" y="804" width="3" height="53"/><rect x="1468" y="808" width="3" height="49"/><rect x="1476" y="809" width="3" height="48"/><rect x="1484" y="811" width="3" height="46"/><rect x="68" y="857" width="3" height="1"/><rect x="1092" y="857" width="3" height="8"/><rect x="1100" y="857" width="3" height="16"/><rect x="1108" y="857" width="3" height="24"/><rect x="1116" y="857" width="3" height="32"/><rect x="1124" y="857" width="3" height="43"/><rect x="1132" y="857" width="3" height="52"/><rect x="1140" y="857" width="3" height="62"/><rect x="1148" y="857" width="3" height="73"/><rect x="1156" y="857" width="3" height="80"/><rect x="1164" y="857" width="3" height="86"/><rect x="1172" y="857" width="3" height="96"/><rect x="1180" y="857" width="3" height="99"/><rect x="1188" y="857" width="3" height="101"/><rect x="1196" y="857" width="3" height="99"/><rect x="1204" y="857" width="3" height="100"/><rect x="1212" y="857" width="3" height="102"/><rect x="1220" y="857" width="3" height="103"/><rect x="1228" y="857" width="3" height="103"/><rect x="1236" y="857" width="3" height="101"/><rect x="1244" y="857" width="3" height="100"/><rect x="1252" y="857" width="3" height="98"/><rect x="1260" y="857" width="3" height="93"/><rect x="1268" y="857" width="3" height="91"/><rect x="1276" y="857" width="3" height="91"/><rect x="1284" y="857" width="3" height="88"/><rect x="1292" y="857" width="3" height="85"/><rect x="1300" y="857" width="3" height="79"/><rect x="1308" y="857" width="3" height="75"/><rect x="1316" y="857" width="3" height="70"/><rect x="1324" y="857" width="3" height="64"/><rect x="1332" y="857" width="3" height="53"/><rect x="1340" y="857" width="3" height="40"/><rect x="1348" y="857" width="3" height="31"/><rect x="1356" y="857" width="3" height="20"/><rect x="1364" y="857" width="3" height="11"/></g><rect x="1868" y="128" width="3" height="1" fill="#000"/><rect x="1868" y="185" width="3" height="1" fill="#000"/><rect x="1868" y="242" width="3" height="1" fill="#000"/><rect x="1868" y="356" width="3" height="1" fill="#000"/><rect x="1868" y="414" width="3" height="1" fill="#000"/><rect x="1868" y="471" width="3" height="1" fill="#000"/><rect x="1868" y="528" width="3" height="1" fill="#000"/><rect x="1868" y="585" width="3" height="1" fill="#000"/><rect x="1868" y="642" width="3" height="1" fill="#000"/><rect x="1868" y="699" width="3" height="1" fill="#000"/><rect x="5" y="972" width="1" height="3" fill="#000"/><rect x="101" y="972" width="1" height="3" fill="#000"/><rect x="197" y="972" width="1" height="3" fill="#000"/><rect x="293" y="972" width="1" height="3" fill="#000"/><rect x="389" y="972" width="1" height="3" fill="#000"/><rect x="485" y="972" width="1" height="3" fill="#000"/><rect x="581" y="972" width="1" height="3" fill="#000"/><rect x="677" y="972" width="1" height="3" fill="#000"/><rect x="773" y="972" width="1" height="3" fill="#000"/><rect x="869" y="972" width="1" height="3" fill="#000"/><rect x="965" y="972" width="1" height="3" fill="#000"/><rect x="1061" y="972" width="1" height="3" fill="#000"/><rect x="1157" y="972" width="1" height="3" fill="#000"/><rect x="1253" y="972" width="1" height="3" fill="#000"/><rect x="1349" y="972" width="1" height="3" fill="#000"/><rect x="1445" y="972" width="1" height="3" fill="#000"/></svg>
<div class="t" style="left:1873.34px;top:122.07px;font-size:13.5px;color:#000;transform:scaleX(0.9713);transform-origin:0 0;">2.875</div>
<div class="t" style="left:1873.34px;top:179.07px;font-size:13.5px;color:#000;transform:scaleX(0.9713);transform-origin:0 0;">2.835</div>
<div class="t" style="left:1873.34px;top:236.07px;font-size:13.5px;color:#000;transform:scaleX(0.9713);transform-origin:0 0;">2.795</div>
<div class="t" style="left:1873.34px;top:350.07px;font-size:13.5px;color:#000;transform:scaleX(0.9713);transform-origin:0 0;">2.715</div>
<div class="t" style="left:1873.34px;top:408.07px;font-size:13.5px;color:#000;transform:scaleX(0.9713);transform-origin:0 0;">2.675</div>
<div class="t" style="left:1873.34px;top:465.07px;font-size:13.5px;color:#000;transform:scaleX(0.9713);transform-origin:0 0;">2.635</div>
<div class="t" style="left:1873.34px;top:522.07px;font-size:13.5px;color:#000;transform:scaleX(0.9713);transform-origin:0 0;">2.595</div>
<div class="t" style="left:1873.34px;top:579.07px;font-size:13.5px;color:#000;transform:scaleX(0.9713);transform-origin:0 0;">2.555</div>
<div class="t" style="left:1873.34px;top:636.07px;font-size:13.5px;color:#000;transform:scaleX(0.9713);transform-origin:0 0;">2.515</div>
<div class="t" style="left:1873.34px;top:693.07px;font-size:13.5px;color:#000;transform:scaleX(0.9713);transform-origin:0 0;">2.475</div>
<div class="a" style="left:1869px;top:293px;width:42px;height:15px;background:#000"></div>
<div class="t" style="left:1873.35px;top:294.77px;font-size:13.5px;color:#fff;transform:scaleX(0.9653);transform-origin:0 0;">2.754</div>
<div class="t" style="left:1871.00px;top:727.07px;font-size:13.5px;color:#000;transform:scaleX(0.9278);transform-origin:0 0;">0.004</div>
<div class="t" style="left:1870.99px;top:850.37px;font-size:13.5px;color:#000;transform:scaleX(0.9467);transform-origin:0 0;">0.00</div>
<div class="t" style="left:1870.92px;top:850.37px;font-size:13.5px;color:#000;transform:scaleX(1.0802);transform-origin:0 0;-webkit-text-stroke:0.5px #000;">0</div>
<div class="t" style="left:1871.45px;top:955.57px;font-size:13.5px;color:#000;transform:scaleX(0.9109);transform-origin:0 0;">-0.004</div>
<div class="t" style="left:3.96px;top:976.14px;font-size:13.3px;color:#000;transform:scaleX(0.9653);transform-origin:0 0;">7 Aug 2025</div>
<div class="t" style="left:99.96px;top:976.14px;font-size:13.3px;color:#000;transform:scaleX(0.9653);transform-origin:0 0;">7 Aug 14:30</div>
<div class="t" style="left:195.96px;top:976.14px;font-size:13.3px;color:#000;transform:scaleX(0.9653);transform-origin:0 0;">7 Aug 20:30</div>
<div class="t" style="left:292.09px;top:976.14px;font-size:13.3px;color:#000;transform:scaleX(0.9653);transform-origin:0 0;">8 Aug 02:30</div>
<div class="t" style="left:388.09px;top:976.14px;font-size:13.3px;color:#000;transform:scaleX(0.9653);transform-origin:0 0;">8 Aug 08:30</div>
<div class="t" style="left:484.09px;top:976.14px;font-size:13.3px;color:#000;transform:scaleX(0.9653);transform-origin:0 0;">8 Aug 14:30</div>
<div class="t" style="left:580.09px;top:976.14px;font-size:13.3px;color:#000;transform:scaleX(0.9653);transform-origin:0 0;">8 Aug 20:30</div>
<div class="t" style="left:676.02px;top:976.14px;font-size:13.3px;color:#000;transform:scaleX(0.9653);transform-origin:0 0;">9 Aug 02:30</div>
<div class="t" style="left:772.02px;top:976.14px;font-size:13.3px;color:#000;transform:scaleX(0.9653);transform-origin:0 0;">9 Aug 08:30</div>
<div class="t" style="left:868.02px;top:976.14px;font-size:13.3px;color:#000;transform:scaleX(0.9653);transform-origin:0 0;">9 Aug 20:30</div>
<div class="t" style="left:963.64px;top:976.14px;font-size:13.3px;color:#000;transform:scaleX(0.9653);transform-origin:0 0;">10 Aug 02:30</div>
<div class="t" style="left:1059.64px;top:976.14px;font-size:13.3px;color:#000;transform:scaleX(0.9653);transform-origin:0 0;">10 Aug 09:30</div>
<div class="t" style="left:1155.64px;top:976.14px;font-size:13.3px;color:#000;transform:scaleX(0.9653);transform-origin:0 0;">10 Aug 15:30</div>
<div class="t" style="left:1251.64px;top:976.14px;font-size:13.3px;color:#000;transform:scaleX(0.9653);transform-origin:0 0;">10 Aug 21:30</div>
<div class="t" style="left:1347.64px;top:976.14px;font-size:13.3px;color:#000;transform:scaleX(0.9653);transform-origin:0 0;">11 Aug 03:30</div>
<div class="t" style="left:1443.64px;top:976.14px;font-size:13.3px;color:#000;transform:scaleX(0.9653);transform-origin:0 0;">11 Aug 09:30</div>
<svg class="a" style="left:8px;top:113px" width="10" height="7"><path d="M0 0H9L4.5 6Z" fill="#000"/></svg>
<div class="t" style="left:22.38px;top:109.25px;font-size:13.4px;color:#000;transform:scaleX(0.8586);transform-origin:0 0;">NEAR,M30</div>
<div class="t" style="left:87.35px;top:109.25px;font-size:13.4px;color:#000;transform:scaleX(0.9672);transform-origin:0 0;">2.760</div>
<div class="t" style="left:123.65px;top:109.25px;font-size:13.4px;color:#000;transform:scaleX(0.9701);transform-origin:0 0;">2.762</div>
<div class="t" style="left:159.35px;top:109.25px;font-size:13.4px;color:#000;transform:scaleX(0.9672);transform-origin:0 0;">2.750</div>
<div class="t" style="left:195.16px;top:109.25px;font-size:13.4px;color:#000;transform:scaleX(0.9540);transform-origin:0 0;">2.754</div>
<div class="t" style="left:8.45px;top:728.51px;font-size:13.1px;color:#000;transform:scaleX(0.9090);transform-origin:0 0;">Linear Regression Slope 0.001</div>
<div class="a" style="left:1056px;top:117px;width:803px;height:389px;box-shadow:0 0 12px 3px rgba(0,0,0,0.22)"></div><div class="a" style="left:1055px;top:117px;width:804px;height:389px;background:#f0f0f0;border:1px solid #707070"></div><div class="a" style="left:1056px;top:118px;width:802px;height:39px;background:#fff"></div><div class="t" style="left:1065.27px;top:130.17px;font-size:14.8px;color:#000;transform:scaleX(0.9831);transform-origin:0 0;">Custom Indicator - Linear Regression Slope MT4 by TFLab</div><div class="t" style="left:1766.80px;top:129.48px;font-size:15.5px;color:#000;transform:scaleX(0.9677);transform-origin:0 0;">?</div><svg class="a" style="left:1821px;top:130px" width="14" height="14" viewBox="0 0 14 14" ><path d="M1 1L13 13M13 1L1 13" stroke="#000" stroke-width="1.2"/></svg><div class="a" style="left:1064px;top:189px;width:787px;height:269px;background:#fff;border:1px solid #d9d9d9"></div><div class="a" style="left:1067px;top:168px;width:48px;height:22px;background:#f0f0f0;border:1px solid #d9d9d9;border-bottom:none"></div><div class="t" style="left:1072.50px;top:171.58px;font-size:14.2px;color:#000;transform:scaleX(0.9543);transform-origin:0 0;">About</div><div class="a" style="left:1114px;top:168px;width:66px;height:22px;background:#f0f0f0;border:1px solid #d9d9d9;border-bottom:none"></div><div class="t" style="left:1120.02px;top:171.58px;font-size:14.2px;color:#000;transform:scaleX(0.9550);transform-origin:0 0;">Common</div><div class="a" style="left:1179px;top:165px;width:52px;height:26px;background:#fff;border:1px solid #d9d9d9;border-bottom:none"></div><div class="t" style="left:1185.73px;top:169.58px;font-size:14.2px;color:#000;transform:scaleX(0.9182);transform-origin:0 0;">Inputs</div><div class="a" style="left:1230px;top:168px;width:49px;height:22px;background:#f0f0f0;border:1px solid #d9d9d9;border-bottom:none"></div><div class="t" style="left:1234.13px;top:171.58px;font-size:14.2px;color:#000;transform:scaleX(0.9490);transform-origin:0 0;">Colors</div><div class="a" style="left:1278px;top:168px;width:53px;height:22px;background:#f0f0f0;border:1px solid #d9d9d9;border-bottom:none"></div><div class="t" style="left:1284.37px;top:171.58px;font-size:14.2px;color:#000;transform:scaleX(0.9923);transform-origin:0 0;">Levels</div><div class="a" style="left:1330px;top:168px;width:87px;height:22px;background:#f0f0f0;border:1px solid #d9d9d9;border-bottom:none"></div><div class="t" style="left:1337.33px;top:171.58px;font-size:14.2px;color:#000;transform:scaleX(0.9526);transform-origin:0 0;">Visualization</div><div class="a" style="left:1076px;top:200px;width:615px;height:248px;background:#fff;border:1px solid #828282;border-right-color:#a0a0a0;border-bottom-color:#a0a0a0"></div><div class="t" style="left:1084.73px;top:207.38px;font-size:14.2px;color:#000;transform:scaleX(0.9919);transform-origin:0 0;">Variable</div><div class="t" style="left:1389.43px;top:207.38px;font-size:14.2px;color:#000;transform:scaleX(0.9920);transform-origin:0 0;">Value</div><div class="a" style="left:1382px;top:202px;width:1px;height:24px;background:#e3e3e3"></div><div class="a" style="left:1077px;top:252px;width:613px;height:1px;background:#d5d5d5"></div><svg class="a" style="left:1079px;top:229px" width="21" height="21" viewBox="0 0 21 21" ><path d="M1 1.5H15L20 6.5V18.5L18 17.5L16 19.5L13 17.5L10 19.5L7 17.5L4 19.5L1 18Z" fill="#a9cdf0" stroke="#5f98d3" stroke-width="1"/>
      <path d="M15 1.5V6.5H20" fill="#e6f1fb" stroke="#5f98d3" stroke-width="1"/>
      <text x="10" y="14.5" text-anchor="middle" font-family="Liberation Sans" font-weight="bold" font-size="10" letter-spacing="-0.6" fill="#0c2850" stroke="#0c2850" stroke-width="0.3">123</text></svg><div class="t" style="left:1104.83px;top:232.48px;font-size:14.2px;color:#000;transform:scaleX(0.9470);transform-origin:0 0;">Candles To Include In The Calculation</div><div class="t" style="left:1387.04px;top:232.48px;font-size:14.2px;color:#000;transform:scaleX(0.9145);transform-origin:0 0;">40</div><div class="a" style="left:1077px;top:252px;width:613px;height:26px;background:#ebebeb"></div><div class="a" style="left:1077px;top:278px;width:613px;height:1px;background:#d5d5d5"></div><svg class="a" style="left:1079px;top:255px" width="21" height="21" viewBox="0 0 21 21" ><path d="M1 1.5H15L20 6.5V18.5L18 17.5L16 19.5L13 17.5L10 19.5L7 17.5L4 19.5L1 18Z" fill="#a9cdf0" stroke="#5f98d3" stroke-width="1"/>
      <path d="M15 1.5V6.5H20" fill="#e6f1fb" stroke="#5f98d3" stroke-width="1"/>
      <text x="10" y="14.5" text-anchor="middle" font-family="Liberation Sans" font-weight="bold" font-size="10" letter-spacing="-0.6" fill="#0c2850" stroke="#0c2850" stroke-width="0.3">123</text></svg><div class="t" style="left:1104.42px;top:258.73px;font-size:14.2px;color:#000;transform:scaleX(0.9469);transform-origin:0 0;">Delay In The Channel</div><div class="t" style="left:1386.72px;top:258.73px;font-size:14.2px;color:#000;transform:scaleX(1.0270);transform-origin:0 0;">0</div><div class="a" style="left:1077px;top:304px;width:613px;height:1px;background:#d5d5d5"></div><svg class="a" style="left:1079px;top:281px" width="21" height="21" viewBox="0 0 21 21" ><path d="M1 1.5H15L20 6.5V18.5L18 17.5L16 19.5L13 17.5L10 19.5L7 17.5L4 19.5L1 18Z" fill="#a9cdf0" stroke="#5f98d3" stroke-width="1"/>
      <path d="M15 1.5V6.5H20" fill="#e6f1fb" stroke="#5f98d3" stroke-width="1"/>
      <text x="10" y="14.5" text-anchor="middle" font-family="Liberation Sans" font-weight="bold" font-size="10" letter-spacing="-0.6" fill="#0c2850" stroke="#0c2850" stroke-width="0.3">123</text></svg><div class="t" style="left:1104.43px;top:284.98px;font-size:14.2px;color:#000;transform:scaleX(0.9418);transform-origin:0 0;">Bars To Draw (0=No Limit)</div><div class="t" style="left:1386.32px;top:284.98px;font-size:14.2px;color:#000;transform:scaleX(0.9190);transform-origin:0 0;">1000</div><div class="a" style="left:1077px;top:305px;width:613px;height:26px;background:#ebebeb"></div><div class="a" style="left:1077px;top:331px;width:613px;height:1px;background:#d5d5d5"></div><svg class="a" style="left:1079px;top:308px" width="21" height="21" viewBox="0 0 21 21" ><path d="M1 1.5H15L20 6.5V18.5L18 17.5L16 19.5L13 17.5L10 19.5L7 17.5L4 19.5L1 18Z" fill="#7fdf8a" stroke="#3aa84a" stroke-width="1"/>
      <path d="M15 1.5V6.5H20" fill="#dff7e2" stroke="#3aa84a" stroke-width="1"/>
      <path d="M3.5 13.5L8.5 8.5M9.5 12.5H14" stroke="#0d4a16" stroke-width="2"/></svg><div class="t" style="left:1105.50px;top:311.23px;font-size:14.2px;color:#000;transform:scaleX(0.9530);transform-origin:0 0;">ALERT</div><div class="t" style="left:1387.09px;top:311.23px;font-size:14.2px;color:#000;transform:scaleX(0.9801);transform-origin:0 0;">false</div><div class="a" style="left:1077px;top:357px;width:613px;height:1px;background:#d5d5d5"></div><svg class="a" style="left:1079px;top:334px" width="21" height="21" viewBox="0 0 21 21" ><path d="M1 1.5H15L20 6.5V18.5L18 17.5L16 19.5L13 17.5L10 19.5L7 17.5L4 19.5L1 18Z" fill="#7fdf8a" stroke="#3aa84a" stroke-width="1"/>
      <path d="M15 1.5V6.5H20" fill="#dff7e2" stroke="#3aa84a" stroke-width="1"/>
      <path d="M3.5 13.5L8.5 8.5M9.5 12.5H14" stroke="#0d4a16" stroke-width="2"/></svg><div class="t" style="left:1104.45px;top:337.48px;font-size:14.2px;color:#000;transform:scaleX(0.9260);transform-origin:0 0;">EMAIL</div><div class="t" style="left:1387.09px;top:337.48px;font-size:14.2px;color:#000;transform:scaleX(0.9801);transform-origin:0 0;">false</div><div class="a" style="left:1077px;top:357px;width:613px;height:26px;background:#ebebeb"></div><div class="a" style="left:1077px;top:383px;width:613px;height:1px;background:#d5d5d5"></div><svg class="a" style="left:1079px;top:360px" width="21" height="21" viewBox="0 0 21 21" ><path d="M1 1.5H15L20 6.5V18.5L18 17.5L16 19.5L13 17.5L10 19.5L7 17.5L4 19.5L1 18Z" fill="#7fdf8a" stroke="#3aa84a" stroke-width="1"/>
      <path d="M15 1.5V6.5H20" fill="#dff7e2" stroke="#3aa84a" stroke-width="1"/>
      <path d="M3.5 13.5L8.5 8.5M9.5 12.5H14" stroke="#0d4a16" stroke-width="2"/></svg><div class="t" style="left:1104.42px;top:363.73px;font-size:14.2px;color:#000;transform:scaleX(0.9531);transform-origin:0 0;">NOTIFICATION</div><div class="t" style="left:1387.09px;top:363.73px;font-size:14.2px;color:#000;transform:scaleX(0.9801);transform-origin:0 0;">false</div><div class="a" style="left:1077px;top:410px;width:613px;height:1px;background:#d5d5d5"></div><svg class="a" style="left:1079px;top:387px" width="21" height="21" viewBox="0 0 21 21" ><path d="M1 1.5H15L20 6.5V18.5L18 17.5L16 19.5L13 17.5L10 19.5L7 17.5L4 19.5L1 18Z" fill="#a9cdf0" stroke="#5f98d3" stroke-width="1"/>
      <path d="M15 1.5V6.5H20" fill="#e6f1fb" stroke="#5f98d3" stroke-width="1"/>
      <text x="10" y="14.5" text-anchor="middle" font-family="Liberation Sans" font-weight="bold" font-size="10" letter-spacing="-0.6" fill="#0c2850" stroke="#0c2850" stroke-width="0.3">123</text></svg><div class="t" style="left:1104.43px;top:389.98px;font-size:14.2px;color:#000;transform:scaleX(0.9418);transform-origin:0 0;">MESSAGE_TIMEOUT</div><div class="t" style="left:1387.03px;top:389.98px;font-size:14.2px;color:#000;transform:scaleX(0.9390);transform-origin:0 0;">4</div><div class="a" style="left:1077px;top:410px;width:613px;height:26px;background:#ebebeb"></div><div class="a" style="left:1077px;top:436px;width:613px;height:1px;background:#d5d5d5"></div><svg class="a" style="left:1079px;top:413px" width="21" height="21" viewBox="0 0 21 21" ><path d="M1 1.5H15L20 6.5V18.5L18 17.5L16 19.5L13 17.5L10 19.5L7 17.5L4 19.5L1 18Z" fill="#f1e58a" stroke="#c2ae3a" stroke-width="1"/>
      <path d="M15 1.5V6.5H20" fill="#faf5d0" stroke="#c2ae3a" stroke-width="1"/>
      <text x="9.5" y="14.5" text-anchor="middle" font-family="Liberation Sans" font-size="11" fill="#4a3f05">ab</text></svg><div class="t" style="left:1104.43px;top:416.23px;font-size:14.2px;color:#000;transform:scaleX(0.9439);transform-origin:0 0;">MESSAGE_SUBJECT</div><div class="t" style="left:1386.35px;top:416.23px;font-size:14.2px;color:#000;transform:scaleX(0.9518);transform-origin:0 0;">[Signaler #1]</div><div class="a" style="left:1382px;top:226px;width:1px;height:211px;background:#d7d7d7"></div><div class="a" style="left:1702px;top:376px;width:138px;height:27px;background:#e1e1e1;border:1px solid #adadad"></div><div class="t" style="left:1754.02px;top:383.15px;font-size:14px;color:#000;transform:scaleX(1.0552);transform-origin:0 0;">Load</div><div class="a" style="left:1702px;top:418px;width:138px;height:27px;background:#e1e1e1;border:1px solid #adadad"></div><div class="t" style="left:1754.56px;top:424.95px;font-size:14px;color:#000;transform:scaleX(1.0153);transform-origin:0 0;">Save</div><div class="a" style="left:1533px;top:467px;width:98px;height:26px;background:#e1e1e1;border:2px solid #0078d7"></div><div class="t" style="left:1573.03px;top:473.15px;font-size:14px;color:#000;transform:scaleX(0.8993);transform-origin:0 0;">OK</div><div class="a" style="left:1641px;top:467px;width:98px;height:26px;background:#e1e1e1;border:1px solid #adadad"></div><div class="t" style="left:1668.71px;top:473.15px;font-size:14px;color:#000;transform:scaleX(0.9874);transform-origin:0 0;">Cancel</div><div class="a" style="left:1749px;top:467px;width:98px;height:26px;background:#e1e1e1;border:1px solid #adadad"></div><div class="t" style="left:1779.26px;top:473.15px;font-size:14px;color:#000;transform:scaleX(1.0212);transform-origin:0 0;">Reset</div><svg class="a" style="left:1848px;top:495px" width="9" height="9" viewBox="0 0 9 9" ><rect x="6" y="0" width="2" height="2" fill="#bdbdbd"/><rect x="6" y="3" width="2" height="2" fill="#bdbdbd"/><rect x="3" y="3" width="2" height="2" fill="#bdbdbd"/><rect x="0" y="6" width="2" height="2" fill="#bdbdbd"/><rect x="3" y="6" width="2" height="2" fill="#bdbdbd"/><rect x="6" y="6" width="2" height="2" fill="#bdbdbd"/></svg>
</body></html>
